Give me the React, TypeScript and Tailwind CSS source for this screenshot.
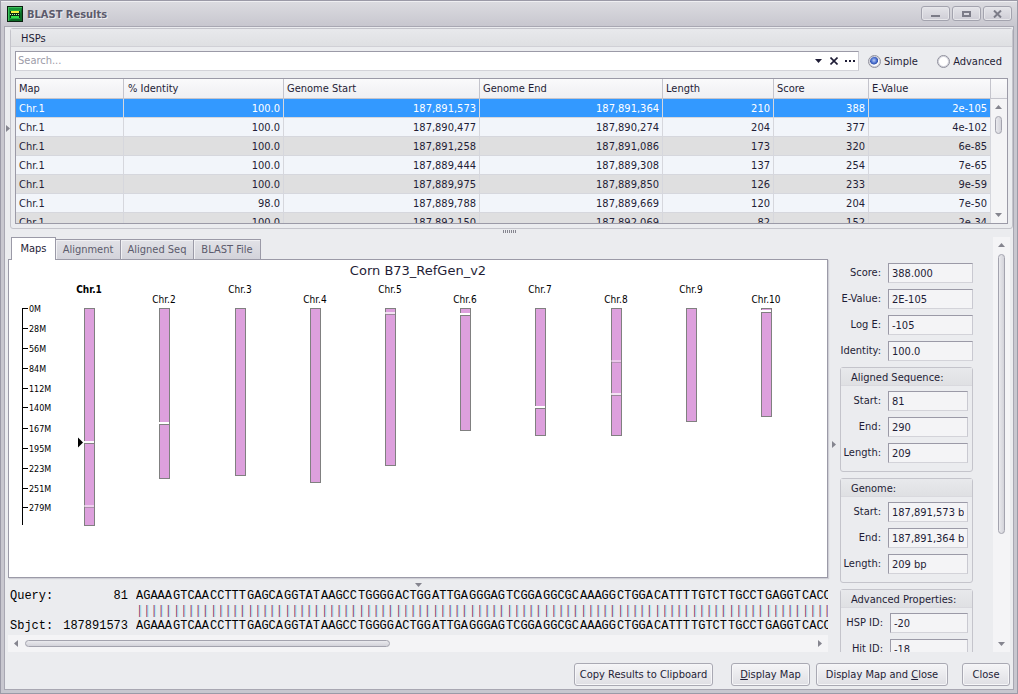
import { useState } from "react";
import type { ReactNode } from "react";

type Hsp = {
  map: string;
  identity: string;
  start: string;
  end: string;
  length: number;
  score: number;
  eValue: string;
};

const hsps: Hsp[] = [
  { map: "Chr.1", identity: "100.0", start: "187,891,573", end: "187,891,364", length: 210, score: 388, eValue: "2e-105" },
  { map: "Chr.1", identity: "100.0", start: "187,890,477", end: "187,890,274", length: 204, score: 377, eValue: "4e-102" },
  { map: "Chr.1", identity: "100.0", start: "187,891,258", end: "187,891,086", length: 173, score: 320, eValue: "6e-85" },
  { map: "Chr.1", identity: "100.0", start: "187,889,444", end: "187,889,308", length: 137, score: 254, eValue: "7e-65" },
  { map: "Chr.1", identity: "100.0", start: "187,889,975", end: "187,889,850", length: 126, score: 233, eValue: "9e-59" },
  { map: "Chr.1", identity: "98.0", start: "187,889,788", end: "187,889,669", length: 120, score: 204, eValue: "7e-50" },
  { map: "Chr.1", identity: "100.0", start: "187,892,150", end: "187,892,069", length: 82, score: 152, eValue: "2e-34" },
];

type Hit = { y: number; opacity: number };
type Chromosome = { name: string; x: number; height: number; hits: Hit[] };

const chromosomes: Chromosome[] = [
  { name: "Chr.1", x: 75, height: 217, hits: [{ y: 133, opacity: 0.95 }, { y: 197, opacity: 0.5 }] },
  { name: "Chr.2", x: 150, height: 170, hits: [{ y: 114, opacity: 1 }] },
  { name: "Chr.3", x: 226, height: 167, hits: [] },
  { name: "Chr.4", x: 301, height: 174, hits: [] },
  { name: "Chr.5", x: 376, height: 157, hits: [{ y: 4, opacity: 0.7 }] },
  { name: "Chr.6", x: 451, height: 122, hits: [{ y: 5, opacity: 1 }] },
  { name: "Chr.7", x: 526, height: 127, hits: [{ y: 98, opacity: 1 }] },
  { name: "Chr.8", x: 602, height: 127, hits: [{ y: 52, opacity: 0.4 }, { y: 85, opacity: 0.7 }] },
  { name: "Chr.9", x: 677, height: 113, hits: [] },
  { name: "Chr.10", x: 752, height: 108, hits: [{ y: 2, opacity: 1 }] },
];

const axisTicks = [
  { label: "0M", y: 0 },
  { label: "28M", y: 20 },
  { label: "56M", y: 40 },
  { label: "84M", y: 60 },
  { label: "112M", y: 80 },
  { label: "140M", y: 99 },
  { label: "167M", y: 120 },
  { label: "195M", y: 140 },
  { label: "223M", y: 160 },
  { label: "251M", y: 180 },
  { label: "279M", y: 199 },
];

const tabs = [
  { label: "Maps", width: "w-[45px]" },
  { label: "Alignment", width: "w-[65px]" },
  { label: "Aligned Seq", width: "w-[73px]" },
  { label: "BLAST File", width: "w-[67px]" },
];

const alignedBases =
  "AGAAAGTCAACCTTTGAGCAGGTATAAGCCTGGGGACTGGATTGAGGGAGTCGGAGGCGCAAAGGCTGGACATTTTGTCTTGCCTGAGGTCACC";

// five bases to a block
const blocks = alignedBases.match(/.{1,5}/g) ?? [];

const arrowPaths = {
  up: "M0 4 L3.5 0 L7 4 Z",
  down: "M0 0 L7 0 L3.5 4 Z",
  left: "M4 0 L4 7 L0 3.5 Z",
  right: "M0 0 L4 3.5 L0 7 Z",
};

function Arrow({ dir, className = "fill-[#85858f]" }: { dir: keyof typeof arrowPaths; className?: string }) {
  const flat = dir === "up" || dir === "down";
  return (
    <svg width={flat ? 7 : 4} height={flat ? 4 : 7} className={`shrink-0 ${className}`} aria-hidden="true">
      <path d={arrowPaths[dir]} />
    </svg>
  );
}

function TitleBar() {
  const button =
    "flex h-[15px] w-[29px] items-center justify-center rounded-[3px] border border-[#a3a3ae] bg-linear-to-b from-[#e4e4e9] to-[#cecdd5] shadow-[inset_0_0_0_1px_#e6e6ea]";
  return (
    <header className="flex h-[25px] shrink-0 items-center border-t border-[#efeff2] bg-linear-to-b from-[#dbdbe0] to-[#c8c7cf] pr-[5px] pb-px pl-1.5">
      <svg width="16" height="16" viewBox="0 0 16 16" aria-hidden="true">
        <rect x="0.5" y="0.5" width="15" height="15" fill="#17943a" stroke="#0a1f10" />
        <path d="M1 1h14v1H2v13H1z" fill="#3ec05c" />
        <path d="M15 2v13H2l4-4h6z" fill="#0b6a25" />
        <rect x="3" y="4" width="10" height="9" fill="#0a2a10" />
        <rect x="4" y="5" width="8" height="2" fill="#f4f03a" />
        <rect x="4" y="10" width="8" height="2" fill="#35e04a" />
        <path d="M3 4.5h10M3 12.5h10" stroke="#1fae3f" />
        <path d="M3 8.5h10" stroke="#b9f5a8" strokeDasharray="1 1" />
      </svg>
      <h1 className="ml-1 flex-1 pt-0.5 font-bold text-[#5c5b6c] [text-shadow:1px_1px_0_#eeeef2]">BLAST Results</h1>
      <div className="flex gap-0.5">
        <button className={button} aria-label="Minimize">
          <svg width="9" height="8" aria-hidden="true">
            <rect x="0" y="5" width="9" height="2" fill="#7c7c88" />
          </svg>
        </button>
        <button className={button} aria-label="Maximize">
          <svg width="9" height="8" aria-hidden="true">
            <path d="M0 1h9v6H0zM2 3v2h5V3z" fillRule="evenodd" fill="#7c7c88" />
          </svg>
        </button>
        <button className={button} aria-label="Close window">
          <svg width="9" height="8" aria-hidden="true">
            <path d="M1 0.5L8 7.5M8 0.5L1 7.5" stroke="#7c7c88" strokeWidth="2" />
          </svg>
        </button>
      </div>
    </header>
  );
}

function RadioOption({ label, checked, onChange }: { label: string; checked: boolean; onChange: () => void }) {
  return (
    <label className="flex items-center gap-[3px]">
      <input
        type="radio"
        name="search-mode"
        checked={checked}
        onChange={onChange}
        className="size-[13px] appearance-none rounded-full border border-[#8f8f9c] bg-white shadow-[inset_0_0_0_1px_#d3d3db] checked:bg-[radial-gradient(circle_at_45%_40%,#b9ccf5_0,#4a70cf_30%,#3454ae_42%,#fff_50%)]"
      />
      <span className="pt-px">{label}</span>
    </label>
  );
}

function SearchRow() {
  const [mode, setMode] = useState("simple");
  return (
    <div className="flex h-5">
      <div className="flex min-w-0 flex-1 items-center border border-t-[#9b9aa7] border-r-[#c9c9d1] border-b-[#d3d3d9] border-l-[#9b9aa7] bg-white">
        <input
          type="text"
          aria-label="Search"
          placeholder="Search..."
          className="min-w-0 flex-1 px-0.5 outline-none placeholder:text-[#9c9ba8]"
        />
        <button aria-label="Search history" className="flex w-4 justify-center">
          <Arrow dir="down" className="fill-[#1f1d36]" />
        </button>
        <button aria-label="Clear search" className="flex w-4 justify-center">
          <svg width="8" height="8" aria-hidden="true">
            <path d="M0.5 0.5L7.5 7.5M7.5 0.5L0.5 7.5" stroke="#1f1d36" strokeWidth="1.6" />
          </svg>
        </button>
        <button aria-label="More options" className="flex w-4 justify-center">
          <svg width="10" height="2" fill="#1f1d36" aria-hidden="true">
            <path d="M0 0h2v2H0zM4 0h2v2H4zM8 0h2v2H8z" />
          </svg>
        </button>
      </div>
      <div className="flex w-[149px] shrink-0 items-center justify-between pt-px pr-1.5 pl-[9px]">
        <RadioOption label="Simple" checked={mode === "simple"} onChange={() => setMode("simple")} />
        <RadioOption label="Advanced" checked={mode === "advanced"} onChange={() => setMode("advanced")} />
      </div>
    </div>
  );
}

function HspTable() {
  const [selected, setSelected] = useState(0);
  return (
    <div className="flex h-[146px] overflow-hidden border border-[#9b9aa7] bg-[#f4f4f6]">
      <div className="min-w-0 flex-1 overflow-hidden">
        <table className="w-full table-fixed border-separate border-spacing-0">
          <colgroup>
            <col className="w-[108px]" />
            <col className="w-[160px]" />
            <col className="w-[196px]" />
            <col className="w-[183px]" />
            <col className="w-[111px]" />
            <col className="w-[95px]" />
            <col className="w-[122px]" />
          </colgroup>
          <thead>
            <tr className="h-5 bg-linear-to-b from-[#fafafb] to-[#efeff2] text-left *:border-r *:border-b *:border-[#c4c4cc] *:px-[3px] *:font-normal">
              <th>Map</th>
              <th className="pl-1!">% Identity</th>
              <th>Genome Start</th>
              <th>Genome End</th>
              <th>Length</th>
              <th>Score</th>
              <th>E-Value</th>
            </tr>
          </thead>
          <tbody>
            {hsps.map((hsp, i) => (
              <tr
                key={hsp.start}
                onClick={() => setSelected(i)}
                className={`h-[19px] text-right *:border-r *:border-b *:border-[#d6d7dd] *:px-[3px] *:pt-0.5 ${
                  i === selected ? "bg-[#3399ff] text-white" : i % 2 ? "bg-[#f2f5fa]" : "bg-[#dfdfe0]"
                }`}
              >
                <td className="text-left">{hsp.map}</td>
                <td>{hsp.identity}</td>
                <td>{hsp.start}</td>
                <td>{hsp.end}</td>
                <td>{hsp.length}</td>
                <td>{hsp.score}</td>
                <td>{hsp.eValue}</td>
              </tr>
            ))}
          </tbody>
        </table>
      </div>
      <div className="flex w-4 flex-col items-center">
        <div className="h-5 w-full shrink-0 border-b border-[#c4c4cc] bg-linear-to-b from-[#fafafb] to-[#efeff2]" />
        <div className="flex flex-1 flex-col items-center py-1.5 pr-px">
          <Arrow dir="up" />
          <div className="mt-[7px] h-[18px] w-[7px] rounded-full border border-[#a3a3ae] bg-linear-to-r from-[#e9e9ed] to-[#d3d3da]" />
          <div className="flex-1" />
          <Arrow dir="down" />
        </div>
      </div>
    </div>
  );
}

function GenomeMap() {
  return (
    <svg className="block size-full" role="img" aria-label="Corn B73_RefGen_v2 chromosome map">
      <text x="409" y="15" textAnchor="middle" className="fill-[#1f1d36] font-['DejaVu_Sans'] text-[13px]">
        Corn B73_RefGen_v2
      </text>
      {/* megabase scale */}
      <g shapeRendering="crispEdges">
        <rect x="13" y="48" width="1" height="217" />
        {axisTicks.map((t) => (
          <rect key={t.label} x="13" y={48 + t.y} width="6" height="1" />
        ))}
      </g>
      {axisTicks.map((t) => (
        <text key={t.label} x="20" y={52 + t.y} className="font-['DejaVu_Sans'] text-[8px]">
          {t.label}
        </text>
      ))}
      {chromosomes.map((c, i) => (
        <g key={c.name}>
          <text
            x={c.x + 5}
            y={i % 2 ? 43 : 33}
            textAnchor="middle"
            className={i === 0 ? "text-[10px] font-bold" : "text-[10px]"}
          >
            {c.name}
          </text>
          <rect x={c.x + 0.5} y="48.5" width="10" height={c.height} fill="#dda0dd" stroke="#808080" />
          {c.hits.map((h) => (
            <g key={h.y} opacity={h.opacity} shapeRendering="crispEdges">
              <rect x={c.x} y={48 + h.y} width="10" height="2" fill="#fff" />
              <rect x={c.x} y={50 + h.y} width="10" height="1" fill="#808080" />
            </g>
          ))}
        </g>
      ))}
      <path d="M69 177.5 L74 182.5 L69 187.5 Z" />
    </svg>
  );
}

function ResultTabs() {
  return (
    <div className="flex min-h-0 flex-1 flex-col">
      <div role="tablist" className="flex h-[22px] shrink-0 items-end pl-[3px]">
        {tabs.map((tab, i) => (
          <button
            key={tab.label}
            role="tab"
            aria-selected={i === 0}
            className={`border border-b-0 border-[#9b9aa7] whitespace-nowrap ${tab.width} ${
              i === 0
                ? "z-10 -mb-px h-[23px] bg-white"
                : "h-5 border-l-0 bg-linear-to-b from-[#e2e2e7] to-[#d3d3da] text-[#5c5b6c] shadow-[inset_1px_1px_0_#f1f1f4]"
            }`}
          >
            {tab.label}
          </button>
        ))}
      </div>
      <div role="tabpanel" className="min-h-0 flex-1 border border-[#9b9aa7] bg-white shadow-[1px_1px_1px_#cfcfd6]">
        <GenomeMap />
      </div>
    </div>
  );
}

function SequenceLine({ label, position, match }: { label?: string; position?: string; match?: boolean }) {
  return (
    <div className="flex h-[15px] gap-2 pl-0.5">
      <div className="flex w-[118px] shrink-0 justify-between">
        <span>{label}</span>
        <span>{position}</span>
      </div>
      <div
        className={`flex min-w-0 flex-1 overflow-hidden ${
          match ? "text-[#8a3e6c] [text-shadow:1px_0_0_#aeeef0]" : ""
        }`}
      >
        {blocks.map((block, i) => (
          <span key={i} className="w-[37px] shrink-0">
            {match ? "|".repeat(block.length) : block}
          </span>
        ))}
      </div>
    </div>
  );
}

function AlignmentStrip() {
  return (
    <div className="shrink-0">
      <div className="flex h-[11px] items-center justify-center pt-0.5">
        <Arrow dir="down" />
      </div>
      <div className="font-['Liberation_Mono',monospace] text-[12px] leading-[15px] text-black">
        <SequenceLine label="Query:" position="81" />
        <SequenceLine match />
        <SequenceLine label="Sbjct:" position="187891573" />
      </div>
      <div className="mt-px flex h-[17px] items-center bg-[#f4f4f6] px-1.5">
        <Arrow dir="left" />
        <div className="ml-[7px] h-[7px] w-[365px] rounded-full border border-[#a3a3ae] bg-linear-to-b from-[#e9e9ed] to-[#d3d3da]" />
        <div className="flex-1" />
        <Arrow dir="right" />
      </div>
    </div>
  );
}

function Field({ id, label, value, width = "w-[80px]" }: { id: string; label: string; value: string; width?: string }) {
  return (
    <div className="flex h-5 items-center justify-end gap-[7px] whitespace-nowrap">
      <label htmlFor={id}>{label}</label>
      <input
        id={id}
        type="text"
        readOnly
        defaultValue={value}
        className={`h-5 shrink-0 border border-t-[#9b9aa7] border-r-[#c9c9d1] border-b-[#d3d3d9] border-l-[#9b9aa7] bg-[#f4f4f6] px-[3px] outline-none ${width}`}
      />
    </div>
  );
}

function FieldGroup({ title, children }: { title: string; children: ReactNode }) {
  return (
    <section className="shrink-0 rounded-[3px] border border-[#c4c4cb]">
      <h2 className="h-[18px] border-b border-[#d9d9de] bg-linear-to-b from-[#e8e9ec] to-[#dfe0e3] pl-2.5 leading-5">
        {title}
      </h2>
      <div className="flex flex-col gap-1.5 pt-[5px] pr-1 pb-2">{children}</div>
    </section>
  );
}

function PropertiesPanel() {
  return (
    <aside className="flex w-[133px] shrink-0 flex-col gap-1.5 overflow-hidden pt-[26px]">
      <Field id="score" label="Score:" value="388.000" width="w-[85px]" />
      <Field id="e-value" label="E-Value:" value="2E-105" width="w-[85px]" />
      <Field id="log-e" label="Log E:" value="-105" width="w-[85px]" />
      <Field id="identity" label="Identity:" value="100.0" width="w-[85px]" />
      <FieldGroup title="Aligned Sequence:">
        <Field id="seq-start" label="Start:" value="81" />
        <Field id="seq-end" label="End:" value="290" />
        <Field id="seq-length" label="Length:" value="209" />
      </FieldGroup>
      <FieldGroup title="Genome:">
        <Field id="genome-start" label="Start:" value="187,891,573 bp" />
        <Field id="genome-end" label="End:" value="187,891,364 bp" />
        <Field id="genome-length" label="Length:" value="209 bp" />
      </FieldGroup>
      <FieldGroup title="Advanced Properties:">
        <Field id="hsp-id" label="HSP ID:" value="-20" width="w-[78px]" />
        <Field id="hit-id" label="Hit ID:" value="-18" width="w-[78px]" />
      </FieldGroup>
    </aside>
  );
}

function ActionButton({ children, className }: { children: ReactNode; className: string }) {
  return (
    <button
      className={`h-[23px] rounded-[3px] border border-[#a9a9b3] bg-linear-to-b from-[#f5f5f7] to-[#dfdfe4] pt-px whitespace-nowrap shadow-[inset_0_0_0_1px_#f6f6f8] ${className}`}
    >
      {children}
    </button>
  );
}

export default function App() {
  return (
    <div className="flex h-screen flex-col border border-[#9b9aa7] bg-[#c8c7cf] font-['DejaVu_Sans_Condensed','Noto_Sans',sans-serif] text-[11px] leading-[14px] text-[#1f1d36]">
      <TitleBar />
      <main className="mx-[3px] mb-[3px] flex min-h-0 flex-1 flex-col border border-[#a8a7b2] bg-[#ebecef] pt-px">
        <div className="flex shrink-0">
          <div className="flex w-[5px] shrink-0 items-center pl-px">
            <Arrow dir="right" />
          </div>
          <section className="min-w-0 flex-1 rounded-[3px] border border-[#c4c4cb]">
            <h2 className="h-[18px] border-b border-[#d0d0d6] bg-linear-to-b from-[#e8e9ec] to-[#dfe0e3] pl-2.5 leading-5">
              HSPs
            </h2>
            <div className="flex flex-col gap-[7px] p-1">
              <SearchRow />
              <HspTable />
            </div>
          </section>
        </div>

        <div className="flex h-2 shrink-0 justify-center pt-px">
          <div className="h-[3px] w-[13px] bg-[repeating-linear-gradient(90deg,#85858f_0_1px,transparent_1px_2px)]" />
        </div>

        <div className="flex min-h-0 flex-1 pl-[3px]">
          <div className="flex min-w-0 flex-1 flex-col">
            <ResultTabs />
            <AlignmentStrip />
          </div>
          <div className="flex w-3 shrink-0 items-center justify-center">
            <Arrow dir="right" />
          </div>
          <PropertiesPanel />
          <div className="mr-[3px] ml-5 flex w-[17px] shrink-0 flex-col items-center bg-[#f4f4f6] py-1.5">
            <Arrow dir="up" />
            <div className="mt-[7px] h-[280px] w-[7px] rounded-full border border-[#a3a3ae] bg-linear-to-r from-[#e9e9ed] to-[#d3d3da]" />
            <div className="flex-1" />
            <Arrow dir="down" />
          </div>
        </div>

        <footer className="flex shrink-0 justify-end pt-[11px] pr-[3px] pb-[3px]">
          <ActionButton className="w-[139px]">Copy Results to Clipboard</ActionButton>
          <ActionButton className="ml-[18px] w-[79px]">
            <u>D</u>isplay Map
          </ActionButton>
          <ActionButton className="ml-1.5 w-[132px]">
            Display Map and <u>C</u>lose
          </ActionButton>
          <ActionButton className="ml-3.5 w-[48px]">Close</ActionButton>
        </footer>
      </main>
    </div>
  );
}
